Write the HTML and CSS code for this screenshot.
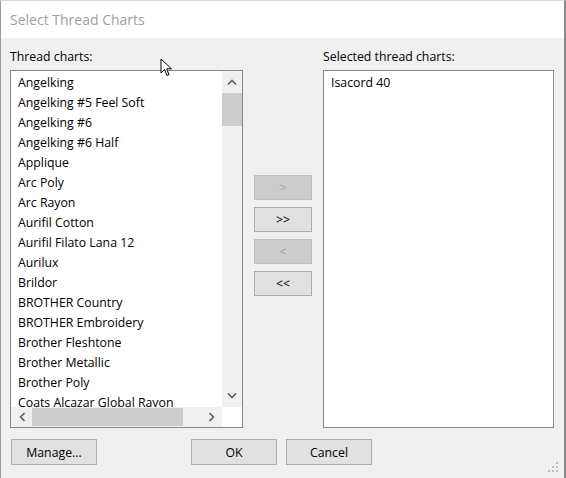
FILE: index.html
```html
<!DOCTYPE html>
<html lang="en">
<head>
  <meta charset="UTF-8" />
  <title>Select Thread Charts</title>
  <link rel="stylesheet" href="styles.css">
</head>
<body>

<div class="window">
  <div class="titlebar">Select Thread Charts</div>

  <div class="content">
    <div class="columns">
      <div class="col col-left">
        <div class="label">Thread charts:</div>
        <div class="listbox">
          <div class="list-main">
            <div class="items">
              <div class="item">Angelking</div>
              <div class="item">Angelking #5 Feel Soft</div>
              <div class="item">Angelking #6</div>
              <div class="item">Angelking #6 Half</div>
              <div class="item">Applique</div>
              <div class="item">Arc Poly</div>
              <div class="item">Arc Rayon</div>
              <div class="item">Aurifil Cotton</div>
              <div class="item">Aurifil Filato Lana 12</div>
              <div class="item">Aurilux</div>
              <div class="item">Brildor</div>
              <div class="item">BROTHER Country</div>
              <div class="item">BROTHER Embroidery</div>
              <div class="item">Brother Fleshtone</div>
              <div class="item">Brother Metallic</div>
              <div class="item">Brother Poly</div>
              <div class="item">Coats Alcazar Global Rayon</div>
            </div>
            <div class="vscroll">
              <div class="arrow">
                <svg width="10" height="6" viewBox="0 0 10 6"><path d="M1 5.5 L5 1.5 L9 5.5" fill="none" stroke="#606060" stroke-width="1.6"/></svg>
              </div>
              <div class="vtrack"><div class="vthumb"></div></div>
              <div class="arrow">
                <svg width="10" height="6" viewBox="0 0 10 6"><path d="M1 0.5 L5 4.5 L9 0.5" fill="none" stroke="#606060" stroke-width="1.6"/></svg>
              </div>
            </div>
          </div>
          <div class="hscroll">
            <div class="hbar">
              <div class="harrow">
                <svg width="6" height="10" viewBox="0 0 6 10"><path d="M5.5 1 L1.5 5 L5.5 9" fill="none" stroke="#606060" stroke-width="1.6"/></svg>
              </div>
              <div class="htrack"><div class="hthumb"></div></div>
              <div class="harrow">
                <svg width="6" height="10" viewBox="0 0 6 10"><path d="M0.5 1 L4.5 5 L0.5 9" fill="none" stroke="#606060" stroke-width="1.6"/></svg>
              </div>
            </div>
            <div class="corner"></div>
          </div>
        </div>
      </div>

      <div class="col-mid">
        <button class="btn small" disabled>&gt;</button>
        <button class="btn small">&gt;&gt;</button>
        <button class="btn small" disabled>&lt;</button>
        <button class="btn small">&lt;&lt;</button>
      </div>

      <div class="col col-right">
        <div class="label">Selected thread charts:</div>
        <div class="listbox">
          <div class="items">
            <div class="item">Isacord 40</div>
          </div>
        </div>
      </div>
    </div>

    <div class="footer">
      <button class="btn wide">Manage...</button>
      <div class="footer-right">
        <button class="btn wide">OK</button>
        <button class="btn wide">Cancel</button>
      </div>
    </div>
  </div>

  <svg class="grip" width="12" height="12" viewBox="0 0 12 12">
    <rect x="8" y="0" width="2" height="2" fill="#bcbcbc"/>
    <rect x="4" y="4" width="2" height="2" fill="#bcbcbc"/>
    <rect x="8" y="4" width="2" height="2" fill="#bcbcbc"/>
    <rect x="0" y="8" width="2" height="2" fill="#bcbcbc"/>
    <rect x="4" y="8" width="2" height="2" fill="#bcbcbc"/>
    <rect x="8" y="8" width="2" height="2" fill="#bcbcbc"/>
  </svg>

  <svg class="cursor" width="14" height="20" viewBox="0 0 14 20">
    <path d="M1 1 L1 15 L4.5 11.5 L7 17.5 L9 16.6 L6.6 10.8 L11.5 10.8 Z" fill="#fff" stroke="#000" stroke-width="1"/>
  </svg>
</div>

</body>
</html>
```

FILE: styles.css
```css
html, body { margin: 0; padding: 0; }
body {
  font-family: "Open Sans", "Noto Sans", Arial, sans-serif;
  font-size: 12.3px;
  color: #000;
  background: #f0f0f0;
}
.window {
  position: relative;
  width: 566px;
  height: 478px;
  box-sizing: border-box;
  border-left: 1px solid #9a9a9a;
  border-right: 2px solid #8a8a8a;
  border-top: 1px solid #d8d8d8;
  background: #f0f0f0;
  display: flex;
  flex-direction: column;
}
.titlebar {
  height: 37px;
  background: #fff;
  color: #a0a0a0;
  font-size: 14px;
  line-height: 38px;
  padding-left: 9px;
}
.content {
  flex: 1;
  padding: 10px 10px 0 9px;
  display: flex;
  flex-direction: column;
}
.columns { display: flex; }
.col { display: flex; flex-direction: column; }
.col-left { width: 233px; }
.col-right { width: 231px; }
.label { height: 22px; line-height: 17px; }
.listbox {
  height: 358px;
  box-sizing: border-box;
  border: 1px solid #828790;
  background: #fff;
  display: flex;
  flex-direction: column;
}
.list-main { flex: 1; display: flex; min-height: 0; }
.items { flex: 1; overflow: hidden; padding-top: 2px; }
.item {
  height: 20px;
  line-height: 20px;
  padding-left: 7px;
  white-space: nowrap;
}
.vscroll {
  width: 20px;
  background: #f0f0f0;
  display: flex;
  flex-direction: column;
}
.arrow {
  height: 22px;
  display: flex;
  align-items: center;
  justify-content: center;
}
.vtrack { flex: 1; }
.vthumb { height: 33px; background: #cdcdcd; }
.hscroll { height: 20px; display: flex; }
.hbar { flex: 1; background: #f0f0f0; display: flex; }
.harrow {
  width: 21px;
  display: flex;
  align-items: center;
  justify-content: center;
}
.htrack { flex: 1; padding: 1px 0; }
.hthumb { width: 151px; height: 100%; background: #cdcdcd; }
.corner { width: 20px; background: #fff; }

.col-mid {
  width: 58px;
  margin: 0 11px;
  padding-top: 127px;
  display: flex;
  flex-direction: column;
  gap: 7px;
}
.btn {
  font-family: inherit;
  font-size: 12.3px;
  color: #000;
  background: #e1e1e1;
  border: 1px solid #adadad;
  padding: 0;
  margin: 0;
  box-sizing: border-box;
}
.btn:disabled {
  background: #cccccc;
  border-color: #bfbfbf;
  color: #a0a0a0;
}
.btn.small { width: 58px; height: 25px; }
.btn.wide { width: 86px; height: 26px; }
.footer {
  margin-top: 11px;
  display: flex;
  padding-left: 1px;
}
.footer-right {
  margin-left: 94px;
  display: flex;
  gap: 9px;
}
.grip { position: absolute; right: 4px; bottom: 4px; }
.cursor { position: absolute; left: 159px; top: 57px; }
```
